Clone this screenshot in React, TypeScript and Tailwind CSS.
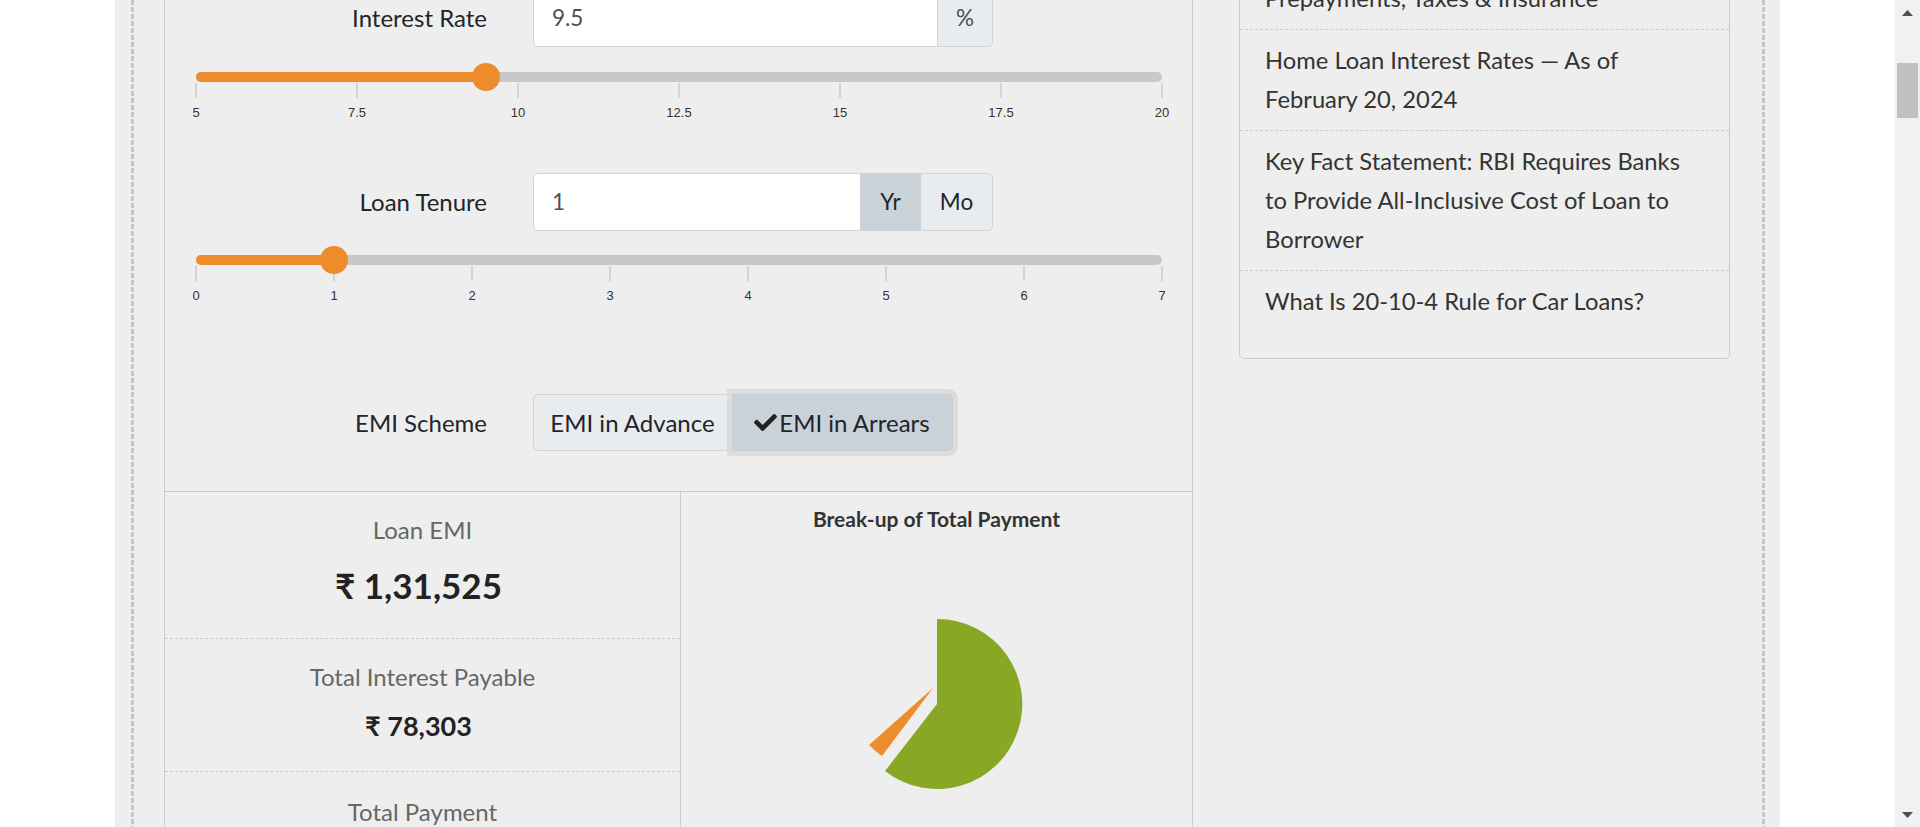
import { FaCheck } from "react-icons/fa";

const rateTicks = ["5", "7.5", "10", "12.5", "15", "17.5", "20"];
const tenureTicks = ["0", "1", "2", "3", "4", "5", "6", "7"];

function Slider({ ticks, pct }: { ticks: string[]; pct: number }) {
  return (
    <div className="pl-[31px] pr-[30px]">
      <div className="relative h-[10px] rounded-full bg-[#c8c8c8]">
        <div className="h-full rounded-full bg-[#ed8c2b]" style={{ width: `${pct}%` }} />
        <div
          className="absolute top-1/2 h-[28px] w-[28px] -translate-x-1/2 -translate-y-1/2 rounded-full bg-[#ed8c2b]"
          style={{ left: `${pct}%` }}
        />
      </div>
      <div className="mt-px flex justify-between">
        {ticks.map((t) => (
          <div key={t} className="flex w-0 flex-col items-center">
            <div className="h-[15px] w-[2px] shrink-0 bg-[#d3d3d3]" />
            <div className="mt-[7px] whitespace-nowrap font-[family-name:'Liberation_Sans',sans-serif] text-[13px] leading-[15px] text-[#333]">
              {t}
            </div>
          </div>
        ))}
      </div>
    </div>
  );
}

function Label({ children }: { children: React.ReactNode }) {
  return <div className="w-[322px] text-right text-[24px] text-[#212529]">{children}</div>;
}

function Stat({ label, value, big }: { label: string; value: string; big?: boolean }) {
  return (
    <div className="text-center">
      <div className="text-[24px] leading-[30px] text-[#666]">{label}</div>
      <div
        className={
          big
            ? "mt-[19px] pr-[8px] text-[35px] font-bold leading-[42px] text-[#222]"
            : "mt-[18px] pr-[8px] text-[27px] font-bold leading-[32px] text-[#222]"
        }
      >
        {value}
      </div>
    </div>
  );
}

function DashedRule() {
  return (
    <div className="h-full w-[3px] shrink-0 bg-[image:repeating-linear-gradient(to_bottom,#c6c6c6_0_5px,transparent_5px_7px)]" />
  );
}

function Scrollbar() {
  return (
    <div className="flex h-full w-[25px] shrink-0 flex-col items-center bg-[#f1f1f1]">
      <svg className="mt-[10px]" width="11" height="6" viewBox="0 0 11 6">
        <path d="M5.5 0 L11 6 L0 6 Z" fill="#505050" />
      </svg>
      <div className="mt-[47px] h-[55px] w-[21px] bg-[#c1c1c1]" />
      <div className="flex-1" />
      <svg className="mb-[9px]" width="11" height="6" viewBox="0 0 11 6">
        <path d="M0 0 L11 0 L5.5 6 Z" fill="#505050" />
      </svg>
    </div>
  );
}

export default function App() {
  return (
    <div className="flex h-[827px] w-full overflow-hidden bg-white font-[family-name:Lato,sans-serif]">
      <div className="flex flex-1 justify-center">
        <div className="flex h-full w-[1665px] bg-[#eeeeee] pl-[16px] pr-[15px]">
          <DashedRule />
          <div className="flex flex-1 items-start pl-[30px]">
            {/* calculator panel */}
            <div className="-mt-[12px] w-[1029px] border border-[#cccccc]">
              <div className="pb-[40px]">
                <div className="flex items-center">
                  <Label>Interest Rate</Label>
                  <div className="ml-[46px] flex h-[58px] w-[460px] text-[22.5px]">
                    <div className="flex flex-1 items-center rounded-l-[5px] border border-[#ced4da] bg-white pl-[18px] text-[#495057]">
                      9.5
                    </div>
                    <div className="flex w-[55px] items-center justify-center rounded-r-[5px] border border-l-0 border-[#ced4da] bg-[#e9ecef] text-[#495057]">
                      %
                    </div>
                  </div>
                </div>
                <div className="mt-[25px]">
                  <Slider ticks={rateTicks} pct={30} />
                </div>

                <div className="mt-[53px] flex items-center">
                  <Label>Loan Tenure</Label>
                  <div className="ml-[46px] flex h-[58px] w-[460px] text-[22.5px]">
                    <div className="flex flex-1 items-center rounded-l-[5px] border border-[#ced4da] bg-white pl-[18px] text-[#495057]">
                      1
                    </div>
                    <div className="flex w-[59px] items-center justify-center border-y border-[#ced4da] bg-[#c9d1d9] text-[#212529]">
                      Yr
                    </div>
                    <div className="flex w-[73px] items-center justify-center rounded-r-[5px] border border-[#ced4da] bg-[#e9ecef] text-[#212529]">
                      Mo
                    </div>
                  </div>
                </div>
                <div className="mt-[24px]">
                  <Slider ticks={tenureTicks} pct={100 / 7} />
                </div>

                <div className="mt-[91px] flex items-center">
                  <Label>EMI Scheme</Label>
                  <div className="ml-[46px] flex h-[57px] text-[24px] text-[#212529]">
                    <div className="flex w-[199px] items-center justify-center rounded-l-[5px] border border-[#ced4da] bg-[#e9ecef]">
                      EMI in Advance
                    </div>
                    <div className="flex w-[221px] items-center justify-center gap-[2px] rounded-r-[5px] border border-l-0 border-[#c3cbd3] bg-[#c9d1d9] ring-[5px] ring-[#dcdcdc]">
                      <FaCheck className="h-[23px] w-[23px] text-[#222]" />
                      EMI in Arrears
                    </div>
                  </div>
                </div>
              </div>

              {/* results */}
              <div className="grid grid-cols-[516px_1fr] border-t border-[#cccccc]">
                <div className="border-r border-[#cccccc]">
                  <div className="border-b border-dashed border-[#cccccc] pb-[32px] pt-[23px]">
                    <Stat label="Loan EMI" value="₹ 1,31,525" big />
                  </div>
                  <div className="border-b border-dashed border-[#cccccc] pb-[29px] pt-[23px]">
                    <Stat label="Total Interest Payable" value="₹ 78,303" />
                  </div>
                  <div className="pb-[29px] pt-[25px]">
                    <Stat label="Total Payment" value="₹ 15,78,303" />
                  </div>
                </div>
                <div className="pt-[13px]">
                  <div className="text-center text-[21px] font-bold leading-[27px] text-[#333]">
                    Break-up of Total Payment
                  </div>
                  <svg className="mx-auto mt-[8px]" width="300" height="300" viewBox="0 0 300 300">
                    <path d="M150 164 L150 79 A85 85 0 1 1 98 231 Z" fill="#88a825" />
                    <path d="M146 148 L95 216 A85 85 0 0 1 82 205 Z" fill="#ed8c2b" />
                  </svg>
                </div>
              </div>
            </div>

            {/* related articles */}
            <div className="-mt-[33px] ml-[46px] w-[491px] rounded-[5px] border border-[#cccccc] text-[23.75px] leading-[39px] text-[#333]">
              <div className="whitespace-nowrap border-b border-dashed border-[#cccccc] px-[25px] py-[11px]">
                Prepayments, Taxes &amp; Insurance
              </div>
              <div className="whitespace-nowrap border-b border-dashed border-[#cccccc] px-[25px] py-[11px]">
                Home Loan Interest Rates — As of
                <br />
                February 20, 2024
              </div>
              <div className="whitespace-nowrap border-b border-dashed border-[#cccccc] px-[25px] py-[11px]">
                Key Fact Statement: RBI Requires Banks
                <br />
                to Provide All-Inclusive Cost of Loan to
                <br />
                Borrower
              </div>
              <div className="whitespace-nowrap px-[25px] pb-[37px] pt-[11px]">What Is 20-10-4 Rule for Car Loans?</div>
            </div>
          </div>
          <DashedRule />
        </div>
      </div>
      <Scrollbar />
    </div>
  );
}
